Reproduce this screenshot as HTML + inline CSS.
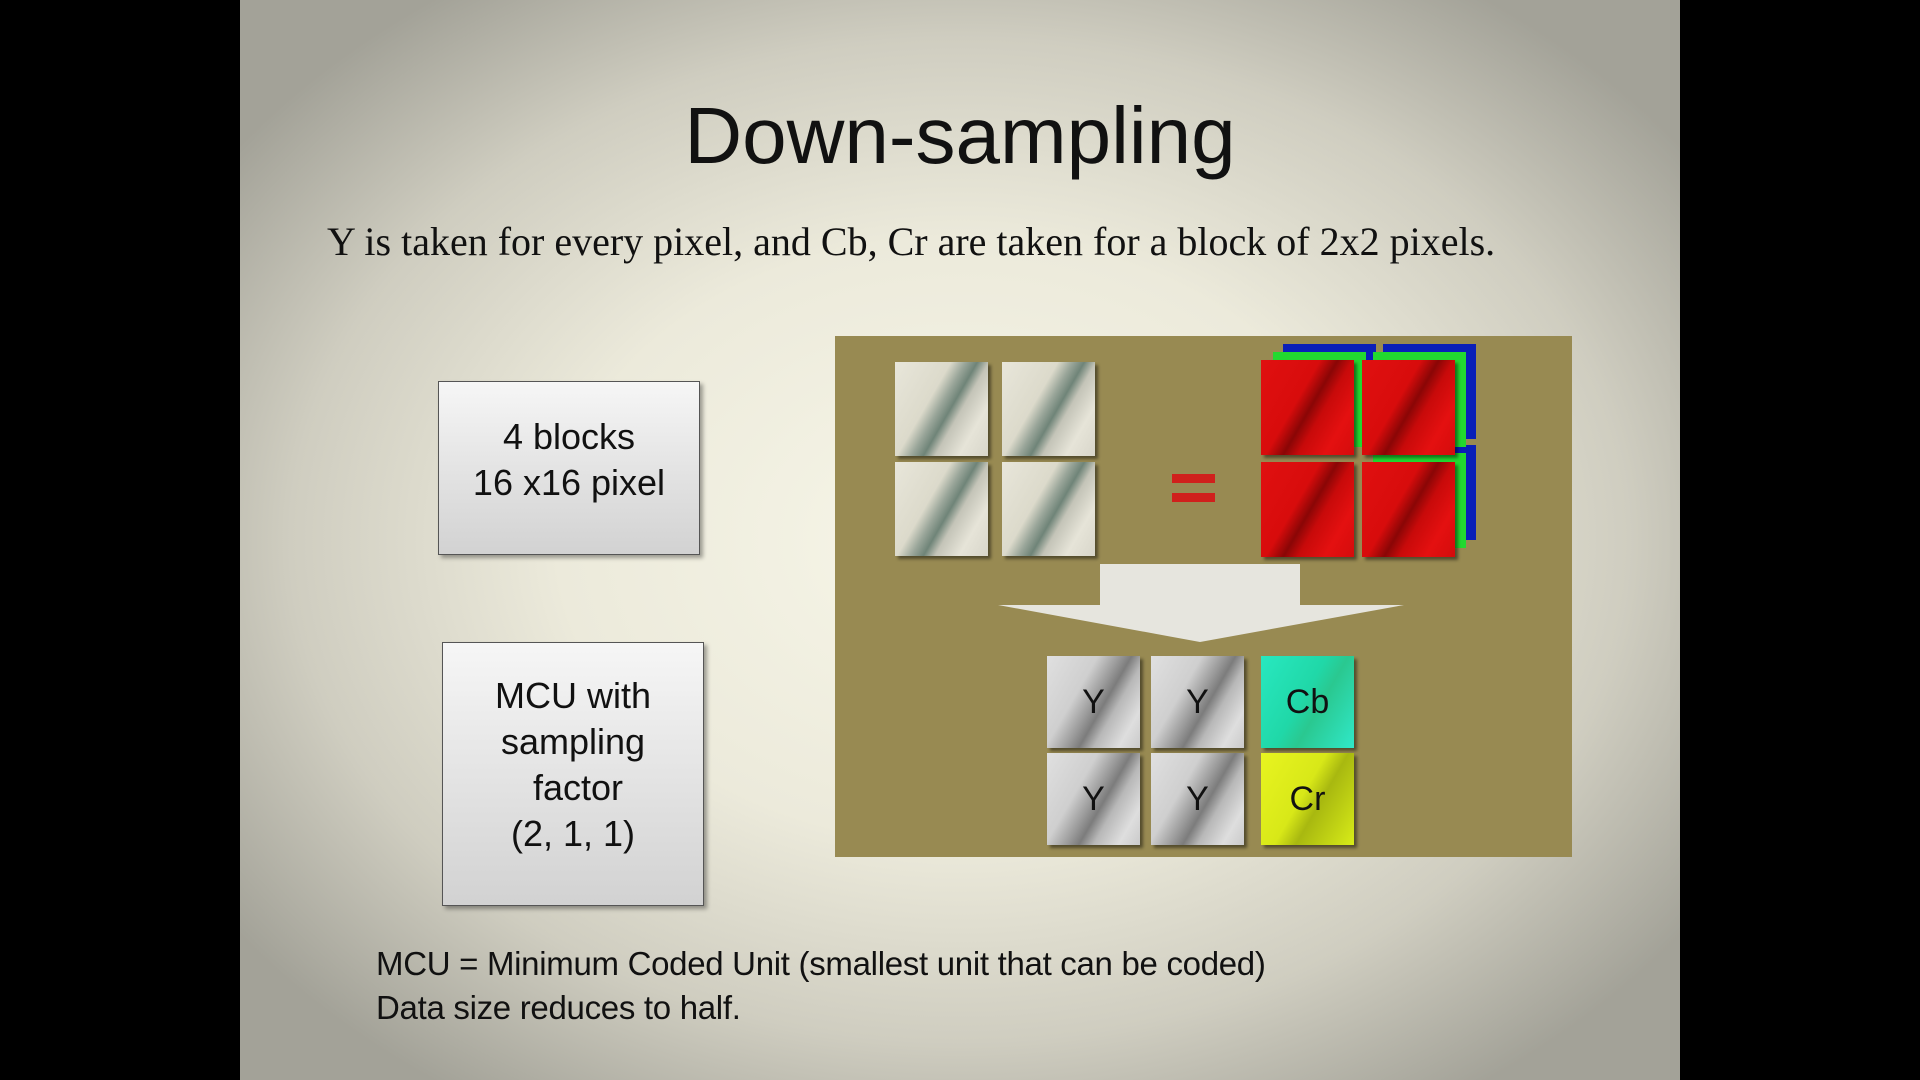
<!DOCTYPE html>
<html><head><meta charset="utf-8"><style>
html,body{margin:0;padding:0;width:1920px;height:1080px;background:#000;overflow:hidden}
#s{position:absolute;left:240px;top:0;width:1440px;height:1080px;
background:radial-gradient(ellipse 62% 62% at 50% 50%,#f7f6e8 0%,#eceadb 45%,#cfcdc0 75%,#a3a298 100%);}
.a{position:absolute}
.t{left:0;width:1440px;top:90px;text-align:center;font:80px "Liberation Sans",sans-serif;color:#111}
.sub{left:87px;top:218px;font:40px "Liberation Serif",serif;color:#111;white-space:nowrap}
.box{background:linear-gradient(#f6f6f6,#d2d2d2);border:1.5px solid #555;box-shadow:3px 3px 4px rgba(0,0,0,.35);
font:36px "Liberation Sans",sans-serif;color:#111;text-align:center;box-sizing:border-box}
.dg{left:595px;top:336px;width:737px;height:521px;background:#988a52}
.g{width:93px;height:94px;box-shadow:3px 3px 3px rgba(0,0,0,.45);
background:linear-gradient(120deg,#e8e6da 0%,#dcdacb 38%,#9aa69a 48%,#6f8478 56%,#c4c4b8 64%,#e6e4d8 80%,#d8d6ca 100%)}
.y{width:93px;height:92px;box-shadow:3px 3px 3px rgba(0,0,0,.45);
background:linear-gradient(120deg,#e0e0e0 0%,#cfcfcf 35%,#9a9a9a 50%,#7c7c7c 58%,#b8b8b8 68%,#dedede 85%,#cacaca 100%);
font:34px "Liberation Sans",sans-serif;color:#111;text-align:center;line-height:92px}
.r{width:93px;height:95px;box-shadow:3px 3px 3px rgba(0,0,0,.45);
background:linear-gradient(120deg,#e01010 0%,#d80c0c 40%,#8a0606 52%,#c80a0a 62%,#e41010 80%,#d40c0c 100%)}
.bl{width:93px;height:95px;background:#0a1fb8}
.gr{width:93px;height:95px;background:#22d830}
</style></head><body><div id="s">
<div class="a t">Down-sampling</div>
<div class="a sub">Y is taken for every pixel, and Cb, Cr are taken for a block of 2x2 pixels.</div>
<div class="a box" style="left:198px;top:381px;width:262px;height:174px;padding-top:32px;line-height:46px">4 blocks<br>16 x16 pixel</div>
<div class="a box" style="left:202px;top:642px;width:262px;height:264px;padding-top:30px;line-height:46px">MCU with<br>sampling<br>&nbsp;factor<br>(2, 1, 1)</div>
<div class="a dg"></div>
<div class="a g" style="left:655px;top:362px"></div>
<div class="a g" style="left:762px;top:362px"></div>
<div class="a g" style="left:655px;top:462px"></div>
<div class="a g" style="left:762px;top:462px"></div>
<div class="a" style="left:932px;top:474px;width:43px;height:9px;background:#d0201c"></div>
<div class="a" style="left:932px;top:493px;width:43px;height:9px;background:#d0201c"></div>
<div class="a bl" style="left:1043px;top:344px"></div>
<div class="a bl" style="left:1143px;top:344px"></div>
<div class="a bl" style="left:1143px;top:445px"></div>
<div class="a gr" style="left:1033px;top:352px"></div>
<div class="a gr" style="left:1133px;top:352px"></div>
<div class="a gr" style="left:1133px;top:453px"></div>
<div class="a r" style="left:1021px;top:360px"></div>
<div class="a r" style="left:1122px;top:360px"></div>
<div class="a r" style="left:1021px;top:462px"></div>
<div class="a r" style="left:1122px;top:462px"></div>
<svg class="a" style="left:0;top:0" width="1440" height="1080"><polygon points="860,564 1060,564 1060,605 1164,605 960,642 758,605 860,605" fill="#e6e5de"/></svg>
<div class="a y" style="left:807px;top:656px">Y</div>
<div class="a y" style="left:911px;top:656px">Y</div>
<div class="a y" style="left:807px;top:753px">Y</div>
<div class="a y" style="left:911px;top:753px">Y</div>
<div class="a y" style="left:1021px;top:656px;background:linear-gradient(120deg,#28e8c0,#20d8a8 45%,#2ac890 60%,#30e8c8)">Cb</div>
<div class="a y" style="left:1021px;top:753px;background:linear-gradient(120deg,#e8f420,#d8e818 45%,#a8b810 60%,#d8ec18)">Cr</div>
<div class="a" style="left:136px;top:942px;font:33px/44px 'Liberation Sans',sans-serif;color:#111;letter-spacing:-0.3px">MCU = Minimum Coded Unit (smallest unit that can be coded)<br>Data size reduces to half.</div>
</div></body></html>
